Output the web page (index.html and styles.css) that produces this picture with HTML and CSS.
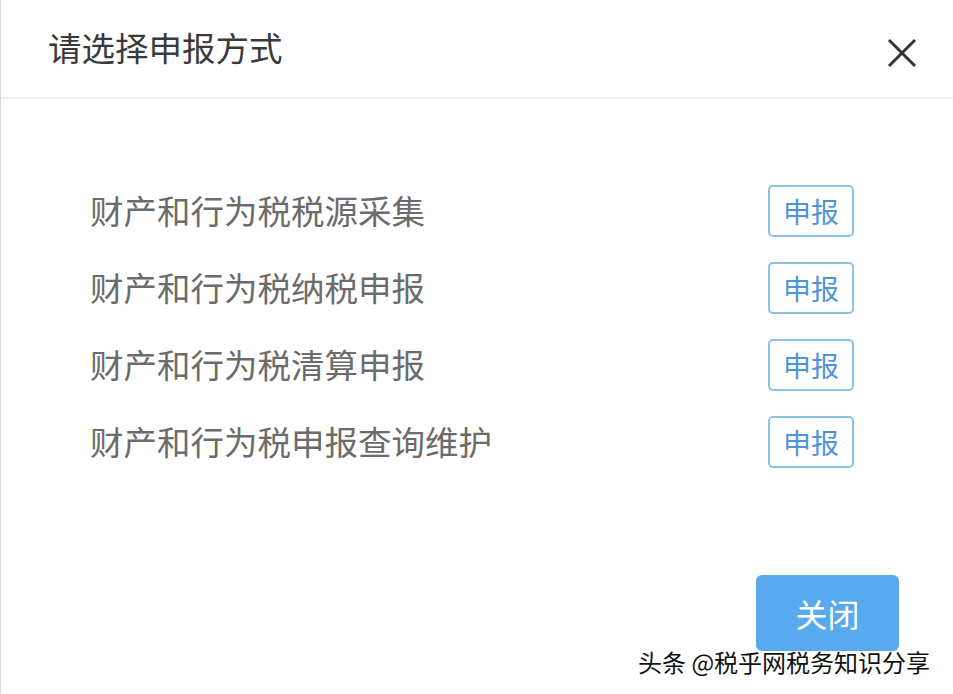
FILE: index.html
```html
<!DOCTYPE html>
<html>
<head>
    <meta charset="utf-8">
    <link rel="stylesheet" href="styles.css">
</head>
<body>
    <div class="dialog">
        <div class="dialog-header">
            <span class="title">请选择申报方式</span>
            <svg class="close-icon" width="30" height="30" viewBox="0 0 30 30">
                <path d="M2 2 L28 28 M28 2 L2 28" stroke="#333" stroke-width="3" fill="none"/>
            </svg>
        </div>
        <div class="dialog-body">
            <div class="row">
                <span class="row-label">财产和行为税税源采集</span>
                <button class="btn-report">申报</button>
            </div>
            <div class="row">
                <span class="row-label">财产和行为税纳税申报</span>
                <button class="btn-report">申报</button>
            </div>
            <div class="row">
                <span class="row-label">财产和行为税清算申报</span>
                <button class="btn-report">申报</button>
            </div>
            <div class="row">
                <span class="row-label">财产和行为税申报查询维护</span>
                <button class="btn-report">申报</button>
            </div>
        </div>
        <div class="dialog-footer">
            <button class="btn-close">关闭</button>
        </div>
    </div>
    <div class="watermark">头条 @税乎网税务知识分享</div>
</body>
</html>
```

FILE: styles.css
```css
body {
    margin: 0;
    font-family: "Noto Sans CJK SC", "Noto Sans", sans-serif;
    background: #fff;
    overflow: hidden;
}
.dialog {
    height: 694px;
    border-left: 1px solid #d8d8d8;
    box-sizing: border-box;
}
.dialog-header {
    height: 97px;
    border-bottom: 2px solid #eeeeee;
    display: flex;
    align-items: center;
    justify-content: space-between;
    padding: 0 36px 0 47px;
}
.title {
    font-size: 33.5px;
    color: #3a3a3a;
    margin-top: -4px;
}
.close-icon {
    margin-top: 8px;
}
.dialog-body {
    padding: 86px 99px 0 89px;
    display: flex;
    flex-direction: column;
    gap: 25px;
}
.row {
    height: 52px;
    display: flex;
    align-items: center;
    justify-content: space-between;
}
.row-label {
    font-size: 33.5px;
    color: #6b6b6b;
    margin-top: -4px;
}
.btn-report {
    width: 86px;
    height: 52px;
    border: 2px solid #8cc1e6;
    border-radius: 5px;
    background: #fff;
    color: #4c95d9;
    font-family: inherit;
    font-size: 28px;
    padding: 0;
}
.dialog-footer {
    display: flex;
    justify-content: flex-end;
    padding: 107px 54px 0 0;
}
.btn-close {
    width: 143px;
    height: 76px;
    border: none;
    border-radius: 6px;
    background: #59a9ee;
    color: #fff;
    font-family: inherit;
    font-size: 32px;
    padding: 0;
}
.watermark {
    position: absolute;
    left: 638px;
    top: 644px;
    font-size: 24px;
    white-space: nowrap;
    color: #111;
    text-shadow: -1px 0 #fff, 1px 0 #fff, 0 -1px #fff, 0 1px #fff;
}
```
